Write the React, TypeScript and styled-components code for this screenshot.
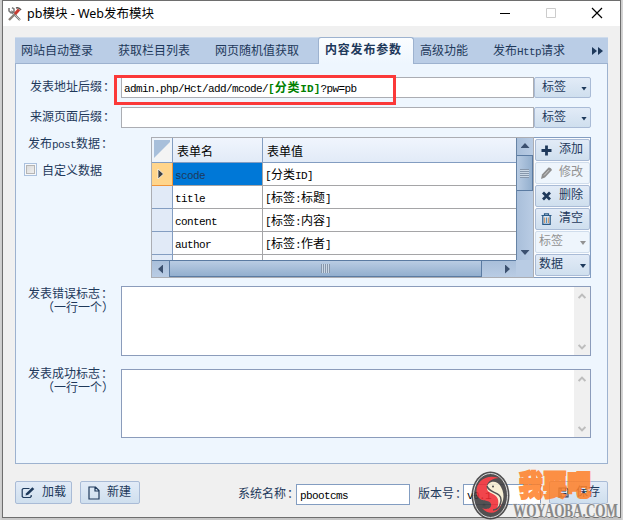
import React from "react";
import styled, { createGlobalStyle, css } from "styled-components";

const GlobalStyle = createGlobalStyle`
  * { box-sizing: border-box; }
  body {
    margin: 0;
    overflow: hidden;
    background: #c9c9c9;
    color: #1e395b;
    font: 12px/14px "Noto Sans CJK SC", sans-serif;
  }
`;

const Desktop = styled.div`
  width: 623px;
  height: 520px;
  padding: 0 2px 2px;
  background: linear-gradient(90deg, #d4d4d4, #c9c9c9 2px, #c4c4c4 620px, #d8d8d8);
`;

const Window = styled.div`
  width: 619px;
  height: 518px;
  border: 1px solid #6e6e6e;
  background: #f0f0f0;
  display: flex;
  flex-direction: column;
`;

const TitleBar = styled.header`
  height: 25px;
  flex: none;
  background: #fff;
  display: flex;
  align-items: center;
  padding-left: 4px;
  color: #000;
`;

const Title = styled.h1`
  margin: 0 auto 0 4px;
  font: 12.5px/20px "Noto Sans", "Noto Sans CJK SC", sans-serif;
  white-space: pre;
`;

const WindowControls = styled.div`
  display: flex;
  margin: -1px 17px 0 0;
  gap: 34px;
`;

const Tabs = styled.nav`
  margin: 11px 12px 0;
  width: 593px;
  height: 27px;
  flex: none;
  display: flex;
  background: #bacde6;
  box-shadow: inset 0 1px #cfdcec, inset 0 -1px #9db2cf;
`;

const Tab = styled.span<{ $w: number; $active?: boolean }>`
  width: ${(p) => p.$w}px;
  flex: none;
  padding-left: 6px;
  line-height: 25px;
  white-space: nowrap;
  ${(p) =>
    p.$active &&
    css`
      border: 1px solid #9db2cf;
      border-bottom: 0;
      border-radius: 3px 3px 0 0;
      background: linear-gradient(#fbfdff, #eef6fe);
      font-weight: 700;
      line-height: 22px;
      letter-spacing: 0.8px;
    `}
`;

const TabArrows = styled.svg`
  margin: 10px 4px 0 auto;
`;

const Panel = styled.main`
  margin-left: 12px;
  width: 593px;
  height: 400px;
  flex: none;
  border: 1px solid #9db2cf;
  border-top: 0;
  background: #eef6fe;
  padding-top: 13px;
`;

const Row = styled.div<{ $gap?: number }>`
  display: flex;
  align-items: flex-start;
  margin-bottom: ${(p) => p.$gap ?? 9}px;
`;

const Label = styled.div<{ $left?: number; $top?: number; $w?: number }>`
  width: ${(p) => p.$w ?? 105}px;
  flex: none;
  margin-top: ${(p) => p.$top ?? 2}px;
  padding-left: ${(p) => p.$left ?? 12}px;
  white-space: nowrap;
`;

const LabelNote = styled.div`
  padding-left: 14px;
`;

const Colon = styled.span`
  margin-left: 1px;
`;

const Mono = styled.span<{ $bold?: boolean }>`
  font-family: "Liberation Mono", monospace;
  font-size: 11px;
  letter-spacing: ${(p) => (p.$bold ? 0.1 : -0.6)}px;
  font-weight: ${(p) => (p.$bold ? 700 : 400)};
`;

const Field = styled.div<{ $w: number; $blue?: boolean }>`
  position: relative;
  width: ${(p) => p.$w}px;
  height: 21px;
  flex: none;
  border: 1px solid ${(p) => (p.$blue ? "#839dc1" : "#abadb3")};
  background: #fff;
  color: #000;
  padding-left: 2px;
  line-height: 17px;
  white-space: nowrap;
`;

const Tag = styled.b`
  color: #008000;
  letter-spacing: 0.8px;
`;

const Highlight = styled.div`
  position: absolute;
  left: -8px;
  top: -3px;
  width: 282px;
  height: 30px;
  border: 3px solid #fb3939;
  z-index: 2;
`;

const Button = styled.button<{ $w: number; $h?: number; $disabled?: boolean; $spread?: boolean; $pad?: number }>`
  width: ${(p) => p.$w}px;
  height: ${(p) => p.$h ?? 22}px;
  flex: none;
  display: flex;
  align-items: center;
  justify-content: ${(p) => (p.$spread ? "space-between" : "flex-start")};
  gap: 7px;
  padding: 0 3px 0 ${(p) => p.$pad ?? 5}px;
  border: 1px solid ${(p) => (p.$disabled ? "#d0ddec" : "#a9bbd6")};
  border-radius: 2px;
  background: ${(p) => (p.$disabled ? "#eef5fc" : "linear-gradient(#e2ebf7, #cfdfee)")};
  color: ${(p) => (p.$disabled ? "#929292" : "#1e395b")};
  font: inherit;
  white-space: nowrap;
`;

const Caption = styled.span`
  margin-top: -4px;
`;

const Caret = styled.i`
  width: 6px;
  height: 4px;
  margin-top: 2px;
  background: currentColor;
  clip-path: polygon(0 0, 100% 0, 50% 100%);
`;

const CheckRow = styled.div`
  display: flex;
  align-items: center;
  gap: 5px;
  margin: 11px 0 0 -4px;
`;

const CheckBox = styled.span`
  width: 13px;
  height: 13px;
  margin-top: -1px;
  border: 1px solid #abc1de;
  background: linear-gradient(135deg, #d6d6d6, #f4f4f4);
  box-shadow: inset 0 0 0 1px #f5f8fc, inset 0 0 0 2px #b5b5b5;
`;

const Grid = styled.section`
  width: 383px;
  height: 141px;
  flex: none;
  border: 1px solid #abadb3;
  display: grid;
  grid-template: 122px 17px / 364px 17px;
  background: #fff;
`;

const Records = styled.div`
  overflow: hidden;
  color: #000;
`;

const Record = styled.div<{ $head?: boolean }>`
  display: grid;
  grid-template-columns: 21px 90px 1fr;
  grid-template-rows: 100%;
  height: ${(p) => (p.$head ? 25 : 23)}px;
  background: ${(p) => (p.$head ? "linear-gradient(#f0f5fd, #e1eaf7)" : "#fff")};
  line-height: ${(p) => (p.$head ? 26 : 21)}px;
`;

const Cell = styled.div<{ $head?: boolean; $selected?: boolean }>`
  border: solid ${(p) => (p.$head ? "#839dc1" : "#a5a5a7")};
  border-width: 0 1px 1px 0;
  padding-left: ${(p) => (p.$head ? 4 : 2)}px;
  background: ${(p) => (p.$selected ? "#0078d7" : "transparent")};
  color: ${(p) => (p.$selected ? "#1e395b" : "#000")};
  &:last-child { border-right: 0; }
`;

const RowHead = styled.div<{ $selected?: boolean }>`
  display: flex;
  align-items: center;
  justify-content: center;
  padding-right: 2px;
  border: solid ${(p) => (p.$selected ? "#f1953a" : "#839dc1")};
  border-width: 0 1px 1px 0;
  background: ${(p) => (p.$selected ? "#ffd58c" : "#e1eaf7")};
`;

const Corner = styled.div`
  border: solid #839dc1;
  border-width: 0 1px 1px 0;
  background: linear-gradient(135deg, #a8bfda 49%, #f4f4f4 51%) content-box, #eef4fb;
  padding: 2px;
`;

const VScroll = styled.div`
  display: flex;
  flex-direction: column;
  align-items: center;
  border-left: 1px solid #6683a5;
  background: linear-gradient(90deg, #a9bfda, #b9cce4);
`;

const VThumb = styled.div`
  width: 16px;
  height: 36px;
  flex: none;
  margin: 7px 0 59px;
  border: 1px solid #5b7ba2;
  border-left: 0;
  background: linear-gradient(90deg, #b9cce3, #93afce);
  display: grid;
  place-items: center;
`;

const HScroll = styled.div`
  display: flex;
  align-items: center;
  border-top: 1px solid #5b7ba2;
  background: linear-gradient(#a9bfda, #b9cce4);
`;

const HThumb = styled.div`
  width: 313px;
  height: 16px;
  margin: 0 23px 0 6px;
  border: 1px solid #5b7ba2;
  border-top: 0;
  background: linear-gradient(#b9cce3, #93afce);
  display: grid;
  place-items: center;
`;

const ScrollCorner = styled.div`
  background: #b9cce4;
`;

const Grip = styled.i<{ $vertical?: boolean }>`
  width: 9px;
  height: 9px;
  background: repeating-linear-gradient(
    ${(p) => (p.$vertical ? "180deg" : "90deg")}, #8797ab 0 1px, #cbd8e6 1px 2px);
`;

const Arrow = styled.i<{ $dir: "up" | "down" | "left" | "right" }>`
  flex: none;
  width: ${(p) => (p.$dir === "up" || p.$dir === "down" ? 9 : 5)}px;
  height: ${(p) => (p.$dir === "up" || p.$dir === "down" ? 5 : 9)}px;
  margin: ${(p) => (p.$dir === "up" ? "5px 0 0" : p.$dir === "left" ? "0 0 0 6px" : "0")};
  background: #3b506f;
  clip-path: ${(p) =>
    ({
      up: "polygon(50% 0, 100% 100%, 0 100%)",
      down: "polygon(0 0, 100% 0, 50% 100%)",
      left: "polygon(100% 0, 100% 100%, 0 50%)",
      right: "polygon(0 0, 100% 50%, 0 100%)",
    })[p.$dir]};
`;

const Actions = styled.div`
  width: 57px;
  height: 141px;
  padding: 1px 0 0 1px;
  display: flex;
  flex-direction: column;
  gap: 1px;
  border: 1px solid #839dc1;
  border-left: 0;
  background: #fafcff;
`;

const TextBox = styled.div<{ $h: number }>`
  width: 470px;
  height: ${(p) => p.$h}px;
  border: 1px solid #8b9cbb;
  background: #fff;
  display: flex;
  justify-content: flex-end;
`;

const TextScroll = styled.div`
  width: 16px;
  background: #f0f0f0;
  display: flex;
  flex-direction: column;
  align-items: center;
  justify-content: space-between;
  padding: 6px 0 5px;
`;

const Footer = styled.footer`
  display: flex;
  align-items: flex-start;
  padding: 17px 0 0 12px;
  position: relative;
`;

const FootLabel = styled.span<{ $ml: number; $w: number }>`
  margin: 5px 0 0 ${(p) => p.$ml}px;
  width: ${(p) => p.$w}px;
  white-space: nowrap;
`;

const FootField = styled(Field)`
  margin-top: 3px;
  padding-left: 3px;
`;

const Gap = styled.span<{ $w: number }>`
  width: ${(p) => p.$w}px;
  flex: none;
`;

const Watermark = styled.div`
  position: absolute;
  left: 467px;
  top: 5px;
  width: 152px;
  height: 50px;
  pointer-events: none;
`;

const chevron = (d: string) => (
  <svg width="8" height="6" viewBox="0 0 8 6">
    <path d={d} fill="none" stroke="#bdbdbd" strokeWidth="2" />
  </svg>
);

const TextArea = ({ h }: { h: number }) => (
  <TextBox $h={h}>
    <TextScroll>
      {chevron("M.6 5 4 1.6 7.4 5")}
      {chevron("M.6 1 4 4.4 7.4 1")}
    </TextScroll>
  </TextBox>
);

const ToolsIcon = () => (
  <svg width="16" height="16" viewBox="0 0 16 16">
    <path d="M4 5 13 14" stroke="#777" strokeWidth="2.2" />
    <path d="M4.5 5.5 13 14" stroke="#ddd" strokeWidth=".8" />
    <path d="M2 2v3l2 2 3-1V3L5 1.6" fill="none" stroke="#777" strokeWidth="1.5" />
    <path d="M2 14 9 7" stroke="#8b8179" strokeWidth="2.4" />
    <path d="M8 8 12 3.5" stroke="#c83b31" strokeWidth="3" />
    <path d="M9 2q3-1 5 2" fill="none" stroke="#5d5552" strokeWidth="1.5" />
  </svg>
);

const PlusIcon = () => (
  <svg width="11" height="11" viewBox="0 0 11 11">
    <path d="M5.5.5v10M.5 5.5h10" stroke="#1e395b" strokeWidth="2.8" />
  </svg>
);

const PencilIcon = () => (
  <svg width="11" height="12" viewBox="0 0 11 12">
    <path d="m0 12 1-4.500L7.500.5q2.500-.5 3.500 2.500L4 10.500z" fill="#8e8e8e" />
    <path d="m3 8.500 5-5.300" stroke="#ddd" strokeWidth=".8" />
  </svg>
);

const CrossIcon = () => (
  <svg width="11" height="10" viewBox="0 0 11 10">
    <path d="m2 1.500 7 7m0-7-7 7" stroke="#1e395b" strokeWidth="2.8" />
  </svg>
);

const TrashIcon = () => (
  <svg width="11" height="12" viewBox="0 0 11 12">
    <path d="M.5 2.500h10M3.500 2V.8h4V2M1.800 3v8.300h7.400V3" fill="none" stroke="#2b5a86" strokeWidth="1.2" />
    <path d="M3.700 4.500v5.500M7.300 4.500v5.500" stroke="#cb8b52" strokeWidth="1" />
    <path d="M5.500 4.500v5.500" stroke="#4b91c4" strokeWidth="1" />
  </svg>
);

const EditIcon = () => (
  <svg width="14" height="12" viewBox="0 0 14 12">
    <path d="M8.500 1.500H2.200L1.200 2.500v7l1 1h7l1-1V8" fill="none" stroke="#1e395b" strokeWidth="1.2" />
    <path d="m4.500 8.500.7-2.200L11.300.3l2 1.700-6.100 5.800z" fill="#1e395b" />
  </svg>
);

const FileIcon = () => (
  <svg width="12" height="14" viewBox="0 0 12 14">
    <path d="M1 1h6.500L11 4.500V13H1zM7 1v4h4" fill="none" stroke="#1e395b" strokeWidth="1.2" />
  </svg>
);

const SaveIcon = () => (
  <svg width="11" height="11" viewBox="0 0 11 11">
    <path d="M1 1h7.500L10 2.500V10H1zM3 1v3h4.500V1M3 10V6.500h5V10" fill="none" stroke="#1e395b" strokeWidth="1.1" />
  </svg>
);

const tabs = [
  { w: 97, label: "网站自动登录" },
  { w: 97, label: "获取栏目列表" },
  { w: 109, label: "网页随机值获取" },
  { w: 96, label: "内容发布参数", active: true },
  { w: 73, label: "高级功能" },
];

const records = [
  { name: "scode", value: "分类ID" },
  { name: "title", value: "标签:标题" },
  { name: "content", value: "标签:内容" },
  { name: "author", value: "标签:作者" },
];

const Value = ({ text }: { text: string }) => (
  <>
    {`[${text}]`.split(/([\x00-\x7f]+)/).map((s, i) => (i % 2 ? <Mono key={i}>{s}</Mono> : s))}
  </>
);

const DropButton = ({ label, w, h, disabled, pad }: { label: string; w: number; h?: number; disabled?: boolean; pad: number }) => (
  <Button $w={w} $h={h} $disabled={disabled} $spread $pad={pad}>
    <Caption>{label}</Caption>
    <Caret />
  </Button>
);

export default function App() {
  return (
    <>
      <GlobalStyle />
      <Desktop>
        <Window>
          <TitleBar>
            <ToolsIcon />
            <Title>pb模块 - Web发布模块</Title>
            <WindowControls>
              <svg width="12" height="12"><path d="M1 6.500h10" stroke="#000" /></svg>
              <svg width="12" height="12"><path d="M1.500 1.500h9v9h-9z" fill="none" stroke="#ccc" /></svg>
              <svg width="12" height="12"><path d="m1 1 10 10M11 1 1 11" stroke="#000" strokeWidth="1.2" /></svg>
            </WindowControls>
          </TitleBar>

          <Tabs>
            {tabs.map((t) => (
              <Tab key={t.label} $w={t.w} $active={t.active}>{t.label}</Tab>
            ))}
            <Tab $w={90}>发布<Mono>Http</Mono>请求</Tab>
            <TabArrows width="12" height="8"><path d="M0 0 5 4 0 8zM6 0l5 4-5 4z" fill="#1e395b" /></TabArrows>
          </Tabs>

          <Panel>
            <Row>
              <Label $left={14}>发表地址后缀<Colon>：</Colon></Label>
              <Field $w={413}>
                <Mono>admin.php/Hct/add/mcode/</Mono>
                <Tag><Mono $bold>[</Mono>分类<Mono $bold>ID]</Mono></Tag>
                <Mono>?pw=pb</Mono>
                <Highlight />
              </Field>
              <DropButton w={57} h={21} label="标签" pad={7} />
            </Row>
            <Row>
              <Label $left={14}>来源页面后缀<Colon>：</Colon></Label>
              <Field $w={413} />
              <DropButton w={57} h={21} label="标签" pad={7} />
            </Row>
            <Row $gap={8}>
              <Label $w={135} $top={-1}>
                发布<Mono>post</Mono>数据<Colon>：</Colon>
                <CheckRow><CheckBox />自定义数据</CheckRow>
              </Label>
              <Grid>
                <Records>
                  <Record $head>
                    <Corner />
                    <Cell $head>表单名</Cell>
                    <Cell $head>表单值</Cell>
                  </Record>
                  {records.map((r, i) => (
                    <Record key={r.name}>
                      <RowHead $selected={i === 0}>
                        {i === 0 && (
                          <svg width="8" height="12"><path d="m1 1 5.500 5L1 11z" fill="#404040" stroke="#fff" strokeWidth=".7" /></svg>
                        )}
                      </RowHead>
                      <Cell $selected={i === 0}><Mono>{r.name}</Mono></Cell>
                      <Cell><Value text={r.value} /></Cell>
                    </Record>
                  ))}
                  <Record><RowHead /><Cell /><Cell /></Record>
                </Records>
                <VScroll>
                  <Arrow $dir="up" />
                  <VThumb><Grip $vertical /></VThumb>
                  <Arrow $dir="down" />
                </VScroll>
                <HScroll>
                  <Arrow $dir="left" />
                  <HThumb><Grip /></HThumb>
                  <Arrow $dir="right" />
                </HScroll>
                <ScrollCorner />
              </Grid>
              <Actions>
                <Button $w={55}><PlusIcon /><Caption>添加</Caption></Button>
                <Button $w={55} $disabled><PencilIcon /><Caption>修改</Caption></Button>
                <Button $w={55}><CrossIcon /><Caption>删除</Caption></Button>
                <Button $w={55}><TrashIcon /><Caption>清空</Caption></Button>
                <DropButton w={55} label="标签" pad={3} disabled />
                <DropButton w={55} label="数据" pad={3} />
              </Actions>
            </Row>
            <Row $gap={13}>
              <Label $top={0}>发表错误标志<Colon>：</Colon><LabelNote>（一行一个）</LabelNote></Label>
              <TextArea h={70} />
            </Row>
            <Row>
              <Label $top={-3}>发表成功标志<Colon>：</Colon><LabelNote>（一行一个）</LabelNote></Label>
              <TextArea h={69} />
            </Row>
          </Panel>

          <Footer>
            <Button $w={57} $h={23}><EditIcon /><Caption>加载</Caption></Button>
            <Gap $w={8} />
            <Button $w={60} $h={23} $pad={7}><FileIcon /><Caption>新建</Caption></Button>
            <FootLabel $ml={98} $w={58}>系统名称<Colon>：</Colon></FootLabel>
            <FootField $w={114} $blue><Mono>pbootcms</Mono></FootField>
            <FootLabel $ml={8} $w={45}>版本号<Colon>：</Colon></FootLabel>
            <FootField $w={78} $blue><Mono>v0.1</Mono></FootField>
            <Gap $w={8} />
            <Button $w={59} $h={23} $pad={8}><SaveIcon /><Caption>保存</Caption></Button>
            <Watermark>
              <svg width="152" height="51" viewBox="0 0 152 51">
                <g opacity=".88">
                  <ellipse cx="20.500" cy="26.500" rx="19" ry="24" fill="#3c3a3c" />
                  <ellipse cx="20.500" cy="26.500" rx="17" ry="22" fill="none" stroke="#d9d9d9" strokeWidth="1" />
                  <path d="M29 9C14 4 4 15 7 26c3 8 13 4 14 9 1 5-5 6-9 4 9 10 20 3 20-8 0-9-15-7-15-14 0-5 7-8 12-8z" fill="#f02c34" />
                  <path d="M17 19c0-7 10-9 14-1 5 9 2 18-4 22 3-9 1-13-6-16-3-1-4-3-4-5z" fill="#f8efd2" />
                  <path d="M17 17c2 8 15 5 14 15-1 6-4 9-8 9" fill="none" stroke="#3c3a3c" strokeWidth="1.5" />
                  <circle cx="23" cy="17.500" r="1" fill="#333" />
                  <circle cx="14" cy="36" r="1.500" fill="#333" />
                </g>
                <text x="49" y="27" textLength="72" lengthAdjust="spacingAndGlyphs" fontFamily="Noto Sans CJK SC" fontSize="29" fontWeight="900" fill="#ff7f27" stroke="#ff7f27" strokeWidth="1.8" opacity=".85">我要吧</text>
                <text x="43" y="48" textLength="105" lengthAdjust="spacingAndGlyphs" fontFamily="Liberation Serif" fontSize="19" fontWeight="700" fill="#888" stroke="#eee" strokeWidth="1" paintOrder="stroke">WOYAOBA.COM</text>
              </svg>
            </Watermark>
          </Footer>
        </Window>
      </Desktop>
    </>
  );
}
